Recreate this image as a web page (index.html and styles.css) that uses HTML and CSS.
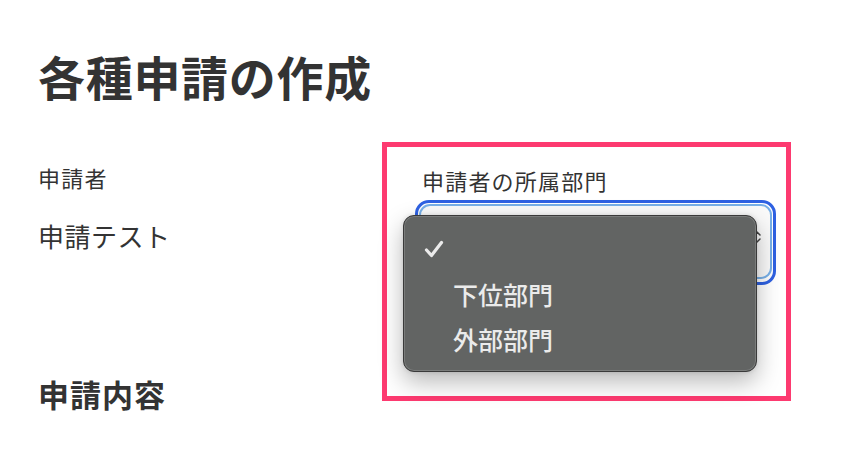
FILE: index.html
```html
<!DOCTYPE html>
<html lang="ja">
<head>
<meta charset="utf-8">
<link rel="stylesheet" href="styles.css">
</head>
<body>
<main class="page">
  <h1 class="title">各種申請の作成</h1>
  <div class="row">
    <div class="field">
      <div class="label">申請者</div>
      <div class="value">申請テスト</div>
    </div>
    <div class="field highlight">
      <div class="label">申請者の所属部門</div>
      <div class="select-ring">
        <div class="select">
          <svg class="chev" width="8" height="14" viewBox="0 0 8 14"><path d="M1 5 L4 2 L7 5 M1 9 L4 12 L7 9" fill="none" stroke="#444" stroke-width="1.5" stroke-linecap="round" stroke-linejoin="round"/></svg>
        </div>
      </div>
      <div class="menu">
        <div class="item"><span class="check"><svg width="20" height="18" viewBox="0 0 20 18"><path d="M2.5 10 L7.5 15.5 L17.5 2.5" fill="none" stroke="#ebebeb" stroke-width="3.2" stroke-linecap="round" stroke-linejoin="round"/></svg></span></div>
        <div class="item"><span class="check"></span>下位部門</div>
        <div class="item"><span class="check"></span>外部部門</div>
      </div>
    </div>
  </div>
  <h2 class="section">申請内容</h2>
</main>
</body>
</html>
```
FILE: styles.css
```css
html, body {
  margin: 0;
  padding: 0;
  background: #ffffff;
}
body {
  font-family: "Noto Sans CJK JP", "Noto Sans", sans-serif;
  color: #333333;
}
.page {
  padding: 48px 0 0 38px;
}
.title {
  margin: 0;
  font-size: 47px;
  font-weight: 700;
  line-height: 56px;
  letter-spacing: 0.7px;
}
.row {
  display: flex;
  margin-top: 38px;
}
.field {
  display: flex;
  flex-direction: column;
}
.field:first-child {
  width: 344px;
  padding-top: 20px;
}
.label {
  font-size: 22px;
  line-height: 30px;
  letter-spacing: 1.2px;
}
.value {
  margin-top: 27px;
  font-size: 26px;
  line-height: 34px;
  letter-spacing: 0.5px;
}
.highlight {
  position: relative;
  width: 399px;
  height: 249px;
  border: 5px solid #fd3a70;
  padding: 0;
}
.highlight .label {
  margin: 18px 0 0 35px;
}
.select-ring {
  margin: 5px 0 0 28px;
  width: 353px;
  height: 77px;
  border: 3px solid #2e61e2;
  border-radius: 14px;
  padding: 1px;
}
.select {
  position: relative;
  height: 75px;
  border: 2px solid #78b0e8;
  border-radius: 11px;
  background: #fafafa;
  box-sizing: border-box;
}
.chev {
  position: absolute;
  right: 9px;
  top: 24px;
}
.menu {
  position: absolute;
  left: 16px;
  top: 68px;
  width: 354px;
  height: 157px;
  background: #626463;
  border: 1px solid #3a3a3a;
  border-radius: 11px;
  box-shadow: inset 0 0 0 1px #7a7c7b, 0 10px 24px rgba(0,0,0,0.28), 0 0 4px rgba(0,0,0,0.12);
  padding-top: 10px;
  box-sizing: border-box;
}
.item {
  display: flex;
  align-items: center;
  height: 45px;
  color: #ebebeb;
  font-size: 25px;
  font-weight: 500;
  padding-left: 20px;
}
.check {
  display: inline-flex;
  width: 29px;
}
.item:nth-child(2), .item:nth-child(3) {
  padding-left: 49px;
}
.item:nth-child(2) .check, .item:nth-child(3) .check {
  display: none;
}
.section {
  margin: 0;
  margin-top: -27px;
  font-size: 31px;
  font-weight: 700;
  line-height: 40px;
  letter-spacing: 1px;
}
```
